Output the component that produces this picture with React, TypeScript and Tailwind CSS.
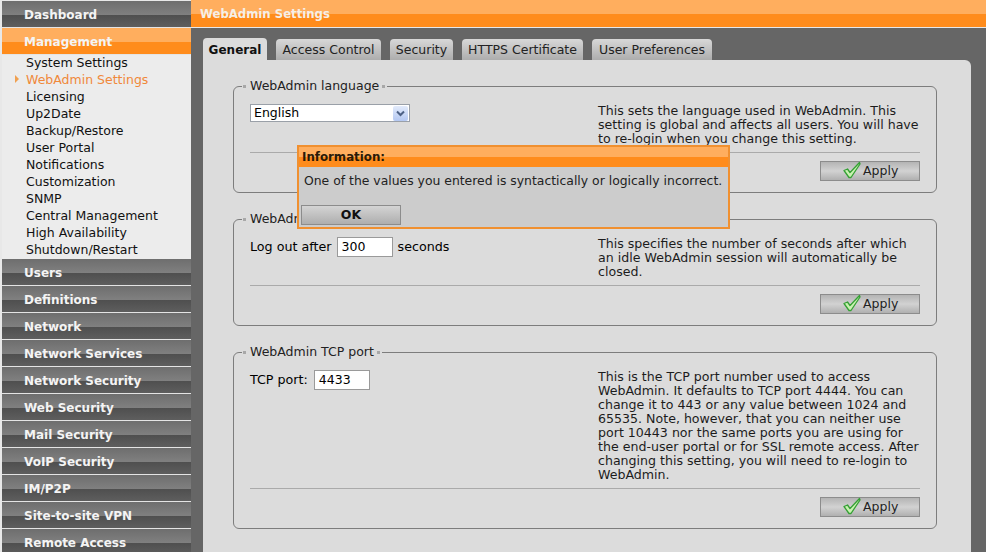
const font = { fontFamily: '"DejaVu Sans", Verdana, sans-serif' }

const navTop = ['Users', 'Definitions', 'Network', 'Network Services', 'Network Security', 'Web Security', 'Mail Security', 'VoIP Security', 'IM/P2P', 'Site-to-site VPN', 'Remote Access']
const subItems = ['System Settings', 'WebAdmin Settings', 'Licensing', 'Up2Date', 'Backup/Restore', 'User Portal', 'Notifications', 'Customization', 'SNMP', 'Central Management', 'High Availability', 'Shutdown/Restart']
const tabs = [
  { label: 'General', w: 'w-[64px]' },
  { label: 'Access Control', w: 'w-[105px]' },
  { label: 'Security', w: 'w-[63px]' },
  { label: 'HTTPS Certificate', w: 'w-[121px]' },
  { label: 'User Preferences', w: 'w-[120px]' },
]

function NavItem({ label, active }: { label: string; active?: boolean }) {
  return (
    <div className="h-[27px] border-b border-[#e4e4e4] flex flex-col relative shrink-0">
      <div className={active ? 'h-[14px] bg-[#ffae5e]' : 'h-[14px] bg-gradient-to-b from-[#6e6e6e] to-[#808080]'} />
      <div className={active ? 'h-[12px] bg-[#ff8c1c]' : 'h-[12px] bg-gradient-to-b from-[#4f4f4f] to-[#5e5e5e]'} />
      <span className="absolute left-[22px] top-[6px] text-[12px] leading-[16px] font-bold text-[#f4f4f4]">{label}</span>
    </div>
  )
}

function Check() {
  return (
    <svg width="18" height="18" viewBox="0 0 18 18" className="-mt-[2px]">
      <path d="M1 9.5 L4.5 8 L7 11.5 L16.5 1.5 L17 3 L8 16.5 L6 16.5 Z" fill="#c8f2b0" stroke="#35a035" strokeWidth="1.3" strokeLinejoin="round" />
    </svg>
  )
}

function Apply() {
  return (
    <div className="w-[100px] h-[20px] border border-[#8c8c8c] bg-gradient-to-b from-[#b4b4b4] via-[#d2d2d2] to-[#b0b0b0] flex items-center pl-[22px] gap-[2px] text-[12.5px] text-[#222]">
      <Check />
      <span className="leading-[16px]">Apply</span>
    </div>
  )
}

function Box({ title, height, bodyHeight, help, children }: { title: string; height: string; bodyHeight: string; help: string[]; children: React.ReactNode }) {
  return (
    <fieldset className={`${height} border border-[#7d7d7d] rounded-[6px] ml-[30px] w-[704px] shrink-0`}>
      <legend className="ml-[8px] px-[8px] text-[12.5px] leading-[16px] text-[#222] relative">
        <span className="absolute left-[1px] top-[7px] w-[3px] h-[3px] bg-[#a8a8a8]" />
        {title}
        <span className="absolute right-[2px] top-[7px] w-[3px] h-[3px] bg-[#a8a8a8]" />
      </legend>
      <div className="px-[16px]">
        <div className={`${bodyHeight} flex pt-[10px]`}>
          <div className="w-[348px]">{children}</div>
          <div className="text-[12.6px] leading-[14px] text-[#1c1c1c] whitespace-nowrap">
            {help.map((line) => (
              <div key={line}>{line}</div>
            ))}
          </div>
        </div>
        <div className="border-t border-[#aaaaaa] pt-[8px] w-[670px] flex justify-end">
          <Apply />
        </div>
      </div>
    </fieldset>
  )
}

export default function App() {
  return (
    <div className="w-[986px] h-[552px] overflow-hidden flex bg-[#666666] relative" style={font}>
      {/* Sidebar */}
      <div className="w-[191px] h-full pl-[2px] pt-[1px] bg-[#e8e8e8] flex flex-col shrink-0">
        <NavItem label="Dashboard" />
        <NavItem label="Management" active />
        <div className="h-[204px] bg-[#ececec] shrink-0">
          {subItems.map((item) => (
            <div key={item} className={`h-[17px] leading-[15px] text-[12.5px] pl-[24px] relative ${item === 'WebAdmin Settings' ? 'text-[#f0883a]' : 'text-[#111]'}`}>
              {item === 'WebAdmin Settings' && (
                <span className="absolute left-[13px] top-[3px] border-l-[4px] border-y-[4px] border-y-transparent border-l-[#f0a050]" />
              )}
              {item}
            </div>
          ))}
        </div>
        {navTop.map((item) => (
          <NavItem key={item} label={item} />
        ))}
      </div>

      {/* Main */}
      <div className="flex-1 flex flex-col min-w-0">
        <div className="h-[28px] border-b border-[#e8e8e8] flex flex-col relative shrink-0">
          <div className="h-[14px] bg-[#ffae5e]" />
          <div className="h-[13px] bg-[#ff8c1c]" />
          <span className="absolute left-[9px] top-[6px] text-[11.7px] leading-[16px] font-bold text-[#f6efe6]">WebAdmin Settings</span>
        </div>
        <div className="pl-[12px] pr-[15px] pt-[10px] flex-1 flex flex-col min-h-0">
          <div className="flex gap-[9px] items-end h-[22px] shrink-0">
            {tabs.map((tab, i) => (
              <div
                key={tab.label}
                className={`${tab.w} rounded-t-[4px] flex items-center justify-center shrink-0 pt-[1px] ${
                  i === 0 ? 'h-[22px] bg-[#dcdcdc] font-bold text-[12px] text-[#111]' : 'h-[21px] bg-gradient-to-b from-[#d8d8d8] to-[#adadad] text-[12.5px] text-[#222]'
                }`}
              >
                {tab.label}
              </div>
            ))}
          </div>
          <div className="flex-1 bg-[#dcdcdc] rounded-tr-[6px] flex flex-col gap-[18px] pt-[18px] min-h-0">
            <Box
              title="WebAdmin language"
              height="h-[115px]"
              bodyHeight="h-[58px]"
              help={['This sets the language used in WebAdmin. This', 'setting is global and affects all users. You will have', 'to re-login when you change this setting.']}
            >
              <div className="w-[160px] h-[18px] border border-[#9aa0a8] bg-white flex items-center justify-between pl-[3px] pr-[1px] text-[12.5px]">
                <span>English</span>
                <span className="w-[15px] h-[15px] rounded-[2px] bg-gradient-to-b from-[#e3ebfb] to-[#b4c8f2] flex items-center justify-center">
                  <svg width="9" height="7" viewBox="0 0 9 7">
                    <path d="M1 1.5 L4.5 5 L8 1.5" fill="none" stroke="#4d6185" strokeWidth="2" />
                  </svg>
                </span>
              </div>
            </Box>
            <Box
              title="WebAdmin idle timeout"
              height="h-[115px]"
              bodyHeight="h-[58px]"
              help={['This specifies the number of seconds after which', 'an idle WebAdmin session will automatically be', 'closed.']}
            >
              <div className="flex items-center text-[12.7px] gap-[5px]">
                <span>Log out after</span>
                <div className="w-[56px] h-[20px] border border-[#9a9a9a] bg-white pl-[4px] text-[12.5px] leading-[18px]">300</div>
                <span>seconds</span>
              </div>
            </Box>
            <Box
              title="WebAdmin TCP port"
              height="h-[185px]"
              bodyHeight="h-[128px]"
              help={[
                'This is the TCP port number used to access',
                'WebAdmin. It defaults to TCP port 4444. You can',
                'change it to 443 or any value between 1024 and',
                '65535. Note, however, that you can neither use',
                'port 10443 nor the same ports you are using for',
                'the end-user portal or for SSL remote access. After',
                'changing this setting, you will need to re-login to',
                'WebAdmin.',
              ]}
            >
              <div className="flex items-center text-[12.7px] gap-[6px]">
                <span>TCP port:</span>
                <div className="w-[56px] h-[20px] border border-[#9a9a9a] bg-white pl-[4px] text-[12.5px] leading-[18px]">4433</div>
              </div>
            </Box>
          </div>
        </div>
      </div>

      {/* Information dialog */}
      <div className="absolute left-[297px] top-[145px] w-[433px] h-[84px] border-2 border-[#f09030] bg-[#cccccc] flex flex-col">
        <div className="h-[20px] flex flex-col relative shrink-0">
          <div className="h-[10px] bg-[#ffae5e]" />
          <div className="h-[10px] bg-[#ff8c1c]" />
          <span className="absolute left-[3px] top-[2px] text-[11.8px] leading-[16px] font-bold text-[#2a1a08]">Information:</span>
        </div>
        <div className="pl-[5px] pt-[6px] text-[12.4px] leading-[16px] text-[#222] whitespace-nowrap">One of the values you entered is syntactically or logically incorrect.</div>
        <div className="ml-[2px] mt-[16px] w-[100px] h-[20px] border border-[#8c8c8c] bg-gradient-to-b from-[#d4d4d4] to-[#aeaeae] text-center text-[12.5px] font-bold leading-[18px] text-[#111]">OK</div>
      </div>
    </div>
  )
}
